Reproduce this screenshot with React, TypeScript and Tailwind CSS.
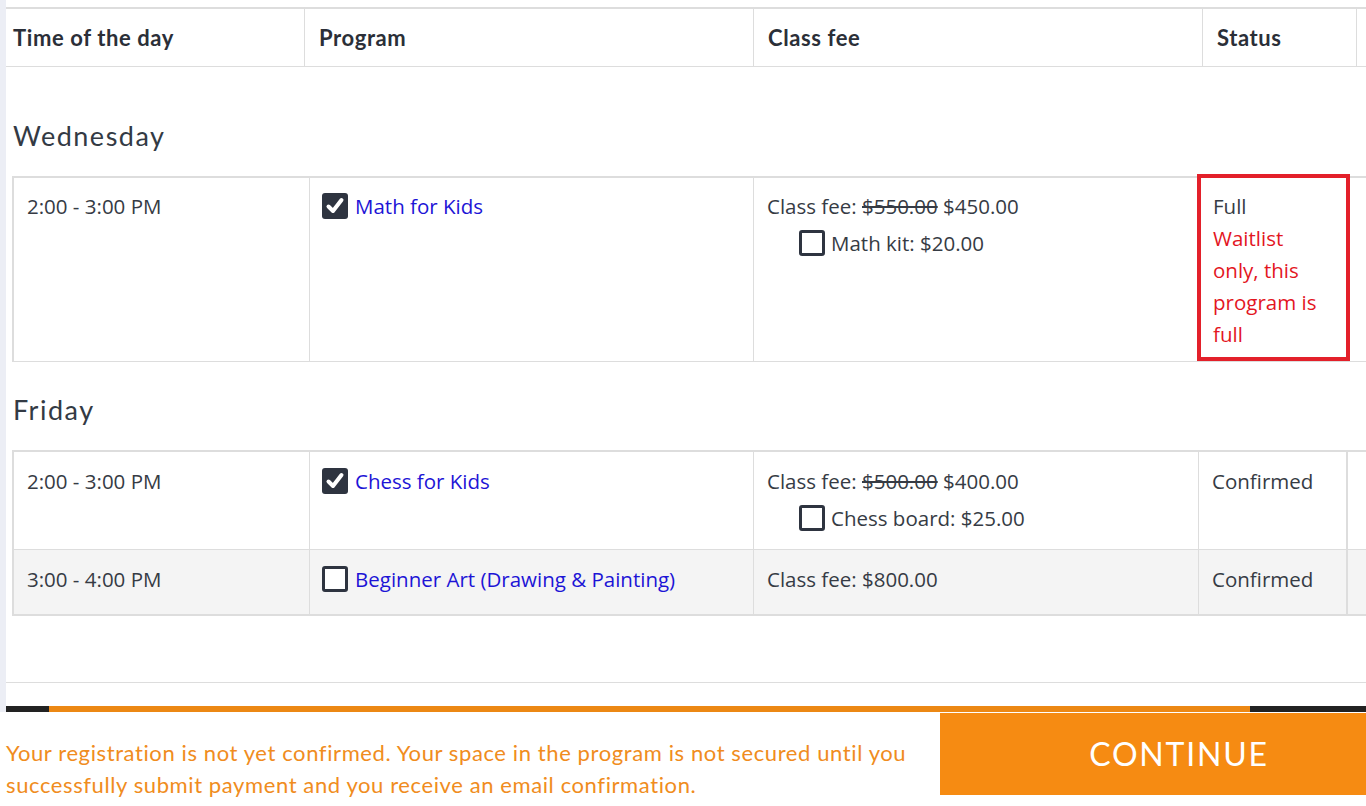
import React from "react";

const body = { fontFamily: '"Open Sans", "Noto Sans", sans-serif' };
const head = { fontFamily: 'Lato, "Open Sans", sans-serif' };

function Box({ checked }: { checked: boolean }) {
  if (checked) {
    return (
      <span className="inline-flex w-[26px] h-[26px] shrink-0 items-center justify-center rounded-[3px] bg-[#2e3440]">
        <svg width="20" height="20" viewBox="0 0 20 20">
          <path d="M3.5 10.5 L8 15 L16.5 4" fill="none" stroke="#fff" strokeWidth="4" strokeLinecap="round" strokeLinejoin="round" />
        </svg>
      </span>
    );
  }
  return <span className="inline-block w-[26px] h-[26px] shrink-0 rounded-[3px] border-[3px] border-[#2e3440] bg-white" />;
}

function Program({ name, checked }: { name: string; checked: boolean }) {
  return (
    <div className="flex items-center gap-[7px] h-[32px]">
      <Box checked={checked} />
      <span className="text-[#1d14d6]">{name}</span>
    </div>
  );
}

function Fee({ was, now, extra }: { was?: string; now: string; extra?: string }) {
  return (
    <div>
      <div className="h-[32px] leading-[32px]">
        Class fee: {was && <span className="line-through">{was}</span>} {now}
      </div>
      {extra && (
        <div className="flex items-center gap-[6px] h-[32px] mt-[5px] pl-[32px]">
          <Box checked={false} />
          <span>{extra}</span>
        </div>
      )}
    </div>
  );
}

function DayTitle({ children, top }: { children: React.ReactNode; top: string }) {
  return (
    <h2 className={`${top} mb-[24px] pl-[7px] text-[27px] tracking-[1.5px] leading-[32px] text-[#333a44]`} style={head}>
      {children}
    </h2>
  );
}

export default function App() {
  return (
    <div className="w-[1366px] h-[806px] overflow-hidden bg-white text-[20.5px] text-[#363b44]" style={body}>
      <div className="flex h-[712px]">
        <div className="w-[6px] shrink-0 bg-[#eceef5]" />
        <div className="flex-1 overflow-hidden">
          {/* header */}
          <div className="mt-[7px] flex h-[60px] border-t-2 border-b border-[#dddddd] font-bold text-[22px] tracking-[0.6px] text-[#2b2f38]" style={head}>
            <div className="w-[299px] shrink-0 border-r border-[#dddddd] pl-[7px] flex items-center">Time of the day</div>
            <div className="w-[449px] shrink-0 border-r border-[#dddddd] pl-[14px] flex items-center">Program</div>
            <div className="w-[449px] shrink-0 border-r border-[#dddddd] pl-[14px] flex items-center">Class fee</div>
            <div className="w-[154px] shrink-0 border-r border-[#dddddd] pl-[14px] flex items-center">Status</div>
            <div className="flex-1" />
          </div>

          <DayTitle top="mt-[53px]">Wednesday</DayTitle>
          <div className="ml-[6px] border-t-2 border-l-2 border-[#dddddd]">
            <div className="flex h-[184px] border-b border-[#dddddd]">
              <div className="w-[296px] shrink-0 border-r border-[#dddddd] px-[13px] pt-[12px] leading-[32px]">2:00 - 3:00 PM</div>
              <div className="w-[444px] shrink-0 border-r border-[#dddddd] px-[12px] pt-[12px]">
                <Program name="Math for Kids" checked />
              </div>
              <div className="w-[443px] shrink-0 px-[13px] pt-[12px]">
                <Fee was="$550.00" now="$450.00" extra="Math kit: $20.00" />
              </div>
              <div className="w-[153px] shrink-0 -mt-[4px] border-4 border-[#e3202a] px-[12px] pt-[12px] leading-[32px]">
                <div>Full</div>
                <div className="text-[#e3161f]">Waitlist only, this program is full</div>
              </div>
              <div className="flex-1" />
            </div>
          </div>

          <DayTitle top="mt-[32px]">Friday</DayTitle>
          <div className="ml-[6px] border-t-2 border-l-2 border-[#dddddd]">
            <div className="flex h-[98px] border-b border-[#dddddd]">
              <div className="w-[296px] shrink-0 border-r border-[#dddddd] px-[13px] pt-[13px] leading-[32px]">2:00 - 3:00 PM</div>
              <div className="w-[444px] shrink-0 border-r border-[#dddddd] px-[12px] pt-[13px]">
                <Program name="Chess for Kids" checked />
              </div>
              <div className="w-[445px] shrink-0 border-r border-[#dddddd] px-[13px] pt-[13px]">
                <Fee was="$500.00" now="$400.00" extra="Chess board: $25.00" />
              </div>
              <div className="w-[149px] shrink-0 border-r-2 border-[#dddddd] px-[13px] pt-[13px] leading-[32px]">Confirmed</div>
              <div className="flex-1" />
            </div>
            <div className="flex h-[66px] border-b-2 border-[#dddddd] bg-[#f4f4f4]">
              <div className="w-[296px] shrink-0 border-r border-[#dddddd] px-[13px] pt-[13px] leading-[32px]">3:00 - 4:00 PM</div>
              <div className="w-[444px] shrink-0 border-r border-[#dddddd] px-[12px] pt-[13px]">
                <Program name="Beginner Art (Drawing & Painting)" checked={false} />
              </div>
              <div className="w-[445px] shrink-0 border-r border-[#dddddd] px-[13px] pt-[13px]">
                <Fee now="$800.00" />
              </div>
              <div className="w-[149px] shrink-0 border-r-2 border-[#dddddd] px-[13px] pt-[13px] leading-[32px]">Confirmed</div>
              <div className="flex-1" />
            </div>
          </div>

          <div className="mt-[66px] border-t border-[#dddddd]" />
          <div className="mt-[23px] flex h-[8px]">
            <div className="w-[43px] bg-[#222222]" />
            <div className="w-[1201px] bg-[#ec8814]" />
            <div className="flex-1 bg-[#222222]" />
          </div>
        </div>
      </div>

      <div className="flex">
        <p className="w-[940px] shrink-0 pl-[6px] pr-[20px] pt-[25px] text-[22px] tracking-[0.6px] leading-[32px] text-[#f08c20]" style={head}>
          Your registration is not yet confirmed. Your space in the program is not secured until you successfully submit payment and you receive an email confirmation.
        </p>
        <button className="mt-[1px] h-[82px] flex-1 pl-[52px] bg-[#f68b12] text-[32px] tracking-[1.8px] text-white" style={head}>
          CONTINUE
        </button>
      </div>
    </div>
  );
}
